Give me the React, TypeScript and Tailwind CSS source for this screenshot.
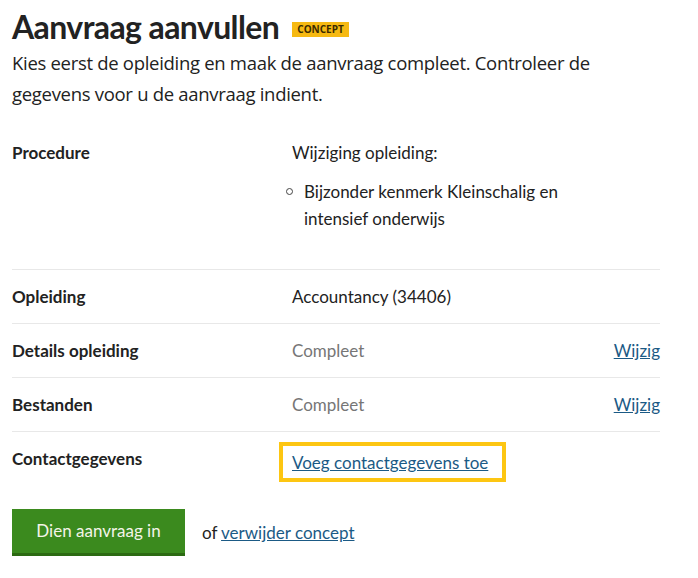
const rows = [
  { label: "Opleiding", value: "Accountancy (34406)", muted: false, edit: false },
  { label: "Details opleiding", value: "Compleet", muted: true, edit: true },
  { label: "Bestanden", value: "Compleet", muted: true, edit: true },
];

const App = () => {
  return (
    <div className="min-h-screen bg-white px-3 pt-[6px] text-[#222] font-['Lato','Liberation_Sans',sans-serif]">
      <div className="flex items-center gap-[13px]">
        <h1 className="text-[32px] font-bold leading-[42px] text-[#222] tracking-[-0.6px]">
          Aanvraag aanvullen
        </h1>
        <span className="mt-[4px] bg-[#f6b912] px-[5px] text-[10px] font-bold leading-[15px] text-[#3a2a00] font-['Open_Sans',sans-serif]">
          CONCEPT
        </span>
      </div>
      <p className="-mt-[1px] max-w-[600px] text-[18.5px] leading-[31px] text-[#222] font-['Open_Sans','Liberation_Sans',sans-serif] tracking-[-0.3px]">
        Kies eerst de opleiding en maak de aanvraag compleet. Controleer de
        gegevens voor u de aanvraag indient.
      </p>

      <div className="mt-[17px] w-[648px] text-[17px] leading-[27px]">
        <div className="flex border-b border-[#e8e8e8] py-[13px]">
          <div className="w-[280px] font-bold">Procedure</div>
          <div className="flex-1">
            <p className="mb-[12px]">Wijziging opleiding:</p>
            <ul className="mb-[24px]">
              <li className="flex">
                <span className="-ml-[6px] mr-[11px] mt-[10px] h-[7px] w-[7px] shrink-0 rounded-full border border-[#444]" />
                <span className="w-[260px]">Bijzonder kenmerk Kleinschalig en intensief onderwijs</span>
              </li>
            </ul>
          </div>
        </div>
        {rows.map((r) => (
          <div key={r.label} className="flex border-b border-[#e8e8e8] py-[13px]">
            <div className="w-[280px] font-bold">{r.label}</div>
            <div className={r.muted ? "flex-1 text-[#767676]" : "flex-1"}>{r.value}</div>
            {r.edit && (
              <a href="#" className="text-[#1b5a85] underline">
                Wijzig
              </a>
            )}
          </div>
        ))}
        <div className="flex py-[13px]">
          <div className="w-[267px] font-bold">Contactgegevens</div>
          <div className="-mt-[3px] border-4 border-[#fdc612] pl-[9px] pr-[14px] pt-[3px] pb-[2px]">
            <a href="#" className="text-[#1b5a85] underline">
              Voeg contactgegevens toe
            </a>
          </div>
        </div>
      </div>

      <div className="mt-[14px] flex items-center gap-[17px]">
        <button className="h-[47px] w-[173px] border-b-[3px] border-[#2c6a12] bg-[#3b8a1e] text-[17px] text-[#f4f4e8]">
          Dien aanvraag in
        </button>
        <span className="text-[17px]">
          of{" "}
          <a href="#" className="text-[#1b5a85] underline">
            verwijder concept
          </a>
        </span>
      </div>
    </div>
  );
};

export default App;
